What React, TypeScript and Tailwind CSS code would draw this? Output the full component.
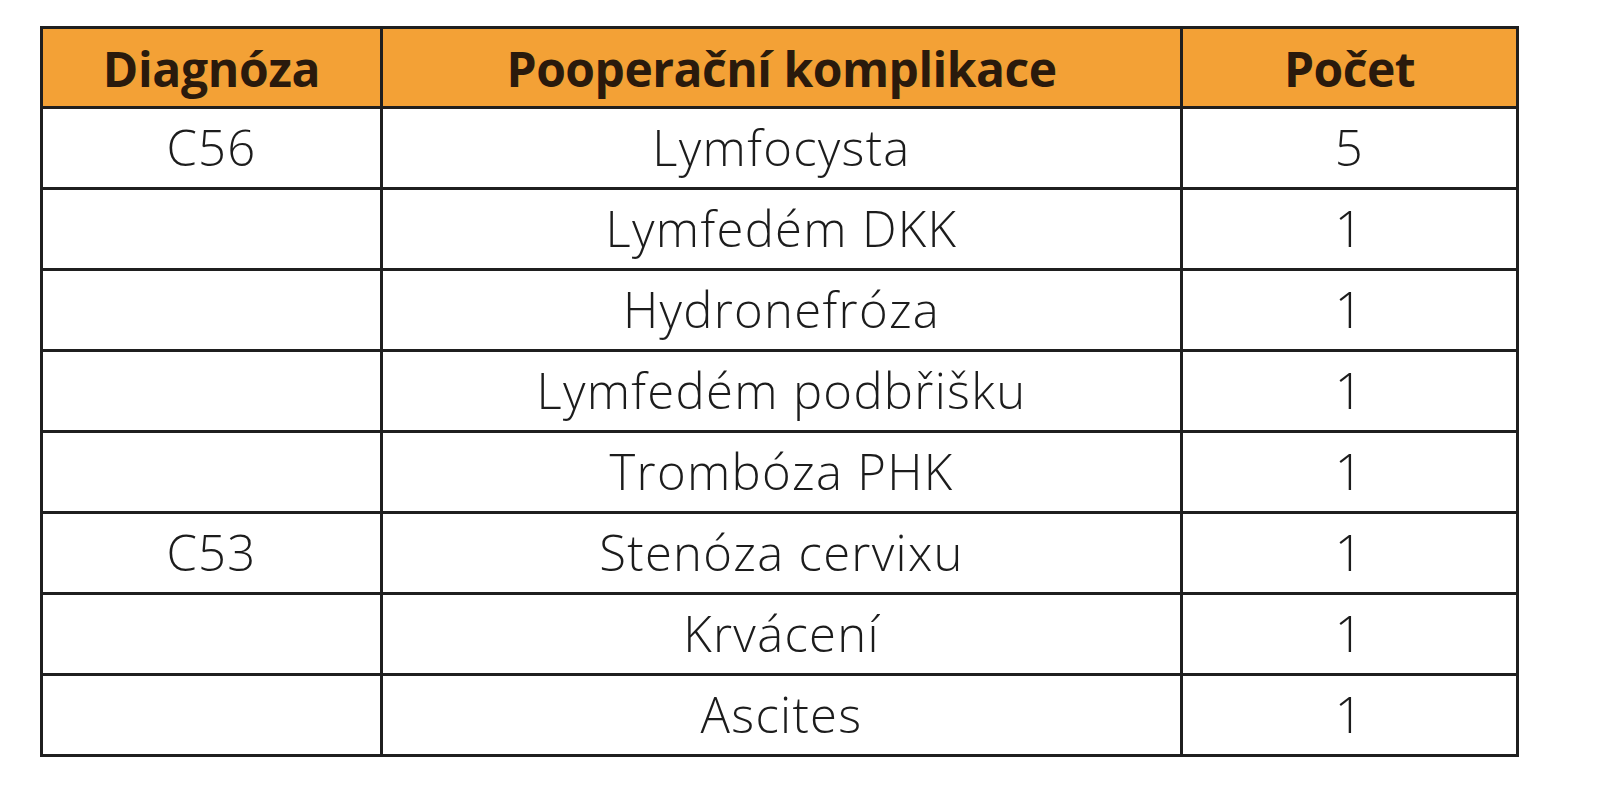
const rows = [
  { dg: 'C56', comp: 'Lymfocysta', n: '5' },
  { dg: '', comp: 'Lymfedém DKK', n: '1' },
  { dg: '', comp: 'Hydronefróza', n: '1' },
  { dg: '', comp: 'Lymfedém podbřišku', n: '1' },
  { dg: '', comp: 'Trombóza PHK', n: '1' },
  { dg: 'C53', comp: 'Stenóza cervixu', n: '1' },
  { dg: '', comp: 'Krvácení', n: '1' },
  { dg: '', comp: 'Ascites', n: '1' },
];

export default function App() {
  return (
    <div className="min-h-[800px] w-[1606px] bg-white pl-[40px] pt-[26px]">
      <table className="w-[1476px] table-fixed border-collapse text-center">
        <colgroup>
          <col className="w-[340px]" />
          <col className="w-[800px]" />
          <col className="w-[336px]" />
        </colgroup>
        <thead>
          <tr className="h-[80px] bg-[#f3a136] font-['Open_Sans',sans-serif] text-[48px] font-bold text-[#2a1a0c]">
            <th className="border-[3px] border-[#1f1f1f] pt-[2px] tracking-[-0.3px]">Diagnóza</th>
            <th className="border-[3px] border-[#1f1f1f] pt-[2px] tracking-[-0.5px]">Pooperační komplikace</th>
            <th className="border-[3px] border-[#1f1f1f] pt-[2px] tracking-[-0.5px]">Počet</th>
          </tr>
        </thead>
        <tbody className="font-['Open_Sans',sans-serif] text-[49px] font-light tracking-[1.3px] text-[#1c1c1c]">
          {rows.map((r, i) => (
            <tr key={i} className="h-[81px]">
              <td className="border-[3px] border-[#1f1f1f]">{r.dg}</td>
              <td className="border-[3px] border-[#1f1f1f]">{r.comp}</td>
              <td className="border-[3px] border-[#1f1f1f]">{r.n}</td>
            </tr>
          ))}
        </tbody>
      </table>
    </div>
  );
}
